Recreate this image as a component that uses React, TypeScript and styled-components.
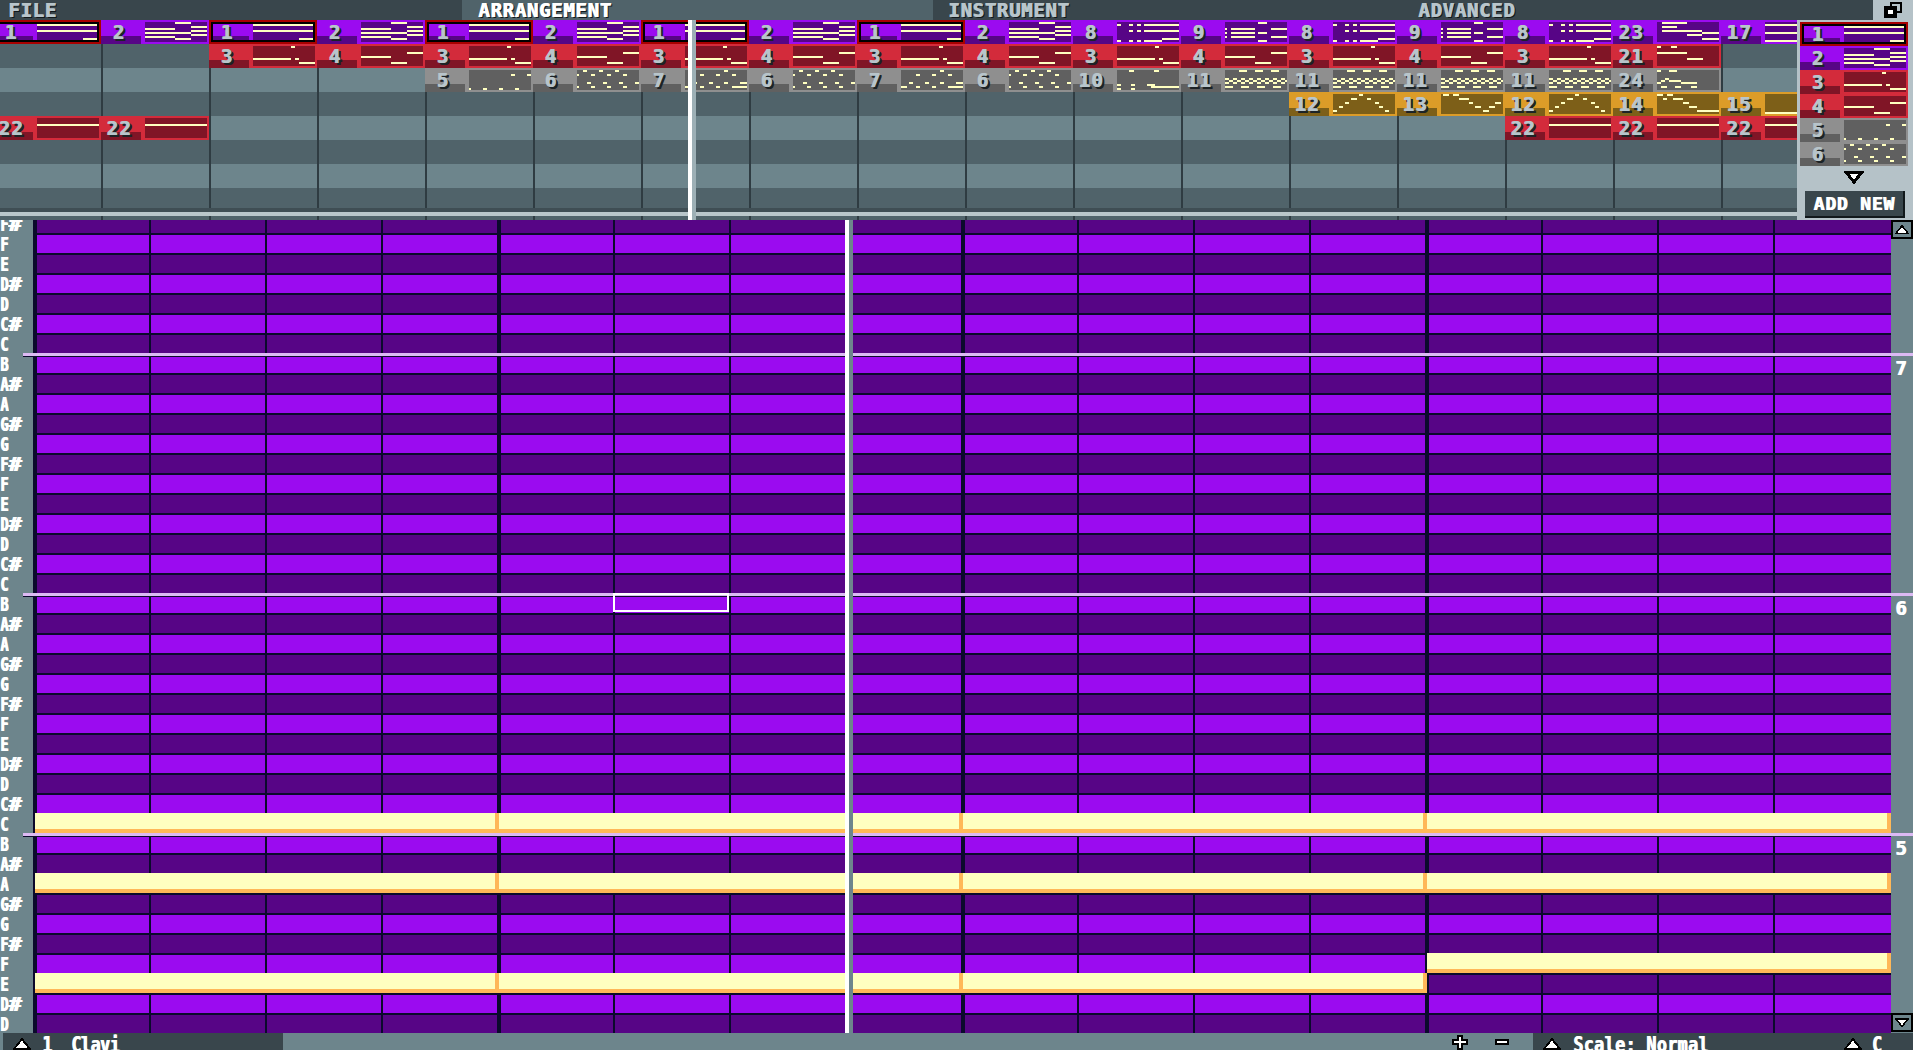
import React from "react";
import styled, { createGlobalStyle } from "styled-components";

const PIXEL_FONT = `"DejaVu Sans Mono", "Liberation Mono", monospace`;

const GlobalStyle = createGlobalStyle`
    html, body {
        margin: 0;
        padding: 0;
        background: #6d858c;
    }
`;

type Theme = "purple" | "red" | "grey" | "orange";
type NoteBar = [number, number, number];

const THEMES: Record<Theme, { main: string; dark: string }> = {
    purple: { main: "#9b0bf0", dark: "#570586" },
    red: { main: "#d32b3b", dark: "#801526" },
    grey: { main: "#8f8f8f", dark: "#606060" },
    orange: { main: "#dc9c28", dark: "#7d5f18" },
};

const dashes = (y: number, start: number, w: number, gap: number): NoteBar[] => {
    const out: NoteBar[] = [];
    for (let x = start; x < 62; x += w + gap) out.push([x, y, Math.min(w, 62 - x)]);
    return out;
};

// mini piano roll of each pattern: [x, y, width], all notes are 2px high
const PATTERNS: Record<string, NoteBar[]> = {
    "1": [[0, 4, 62], [0, 10, 62], [46, 18, 16]],
    "2": [[30, 2, 16], [46, 6, 16], [0, 8, 30], [46, 10, 16], [0, 12, 30], [30, 12, 16], [46, 14, 16], [0, 16, 30], [30, 18, 16]],
    "3": [[38, 2, 4], [0, 14, 38], [42, 14, 4], [46, 18, 16]],
    "4": [[46, 8, 16], [0, 12, 30], [30, 18, 16]],
    "5": [[42, 6, 4], [58, 6, 4], [0, 20, 2], [14, 20, 4], [30, 20, 4], [46, 20, 4]],
    "6": [[6, 2, 4], [22, 2, 4], [38, 2, 4], [0, 6, 2], [14, 6, 4], [30, 6, 4], [46, 6, 4], [10, 14, 4], [26, 14, 4], [42, 14, 4], [58, 14, 4], [0, 18, 2], [14, 18, 4], [30, 18, 4], [46, 18, 4]],
    "7": [[39, 2, 4], [15, 6, 4], [31, 6, 4], [47, 6, 4], [8, 14, 4], [24, 14, 4], [39, 14, 4], [55, 14, 7], [0, 18, 6], [15, 18, 4], [31, 18, 4], [47, 18, 15]],
    "8": [[0, 4, 4], [12, 4, 4], [20, 4, 4], [27, 4, 35], [12, 10, 4], [20, 10, 4], [27, 10, 35], [0, 20, 4], [12, 20, 4], [20, 20, 4], [27, 20, 18], [45, 18, 17]],
    "9": [[33, 2, 9], [0, 8, 2], [6, 8, 24], [46, 8, 16], [0, 12, 2], [6, 12, 24], [33, 12, 9], [0, 16, 2], [6, 16, 24], [46, 16, 16], [33, 20, 9]],
    "10": [[12, 2, 5], [37, 2, 5], [0, 16, 4], [14, 16, 4], [30, 16, 8], [0, 20, 4], [14, 20, 4], [34, 18, 28]],
    "11": [
        ...dashes(2, 14, 8, 8),
        ...dashes(10, 0, 4, 4),
        ...dashes(12, 4, 4, 4),
        ...dashes(14, 0, 4, 4),
        ...dashes(18, 0, 8, 8),
    ],
    "12": [[26, 2, 4], [18, 6, 6], [34, 6, 4], [12, 10, 4], [42, 10, 4], [6, 14, 4], [46, 14, 4], [0, 18, 4], [52, 18, 4]],
    "13": [[2, 2, 6], [12, 2, 6], [18, 6, 10], [28, 10, 4], [54, 10, 6], [34, 14, 6], [48, 14, 6], [42, 18, 6]],
    "14": [[0, 2, 6], [10, 2, 6], [6, 6, 4], [16, 6, 10], [26, 10, 6], [32, 14, 8], [40, 18, 22]],
    "15": [[0, 20, 62]],
    "17": [[0, 4, 62], [0, 12, 62], [0, 20, 62]],
    "21": [[0, 8, 30], [30, 14, 16], [0, 2, 4], [14, 2, 6]],
    "22": [[0, 8, 62]],
    "23": [[5, 2, 25], [5, 6, 15], [5, 10, 40], [45, 12, 17], [30, 14, 15], [45, 18, 17]],
    "24": [[0, 2, 4], [12, 2, 8], [8, 10, 4], [4, 12, 4], [12, 12, 12], [0, 14, 4], [24, 14, 16], [4, 18, 6], [18, 18, 6], [34, 18, 6]],
};

const themeOf = (id: string): Theme => {
    const n = Number(id);
    if ([1, 2, 8, 9, 17, 23].includes(n)) return "purple";
    if ([3, 4, 21, 22].includes(n)) return "red";
    if (n >= 12 && n <= 15) return "orange";
    return "grey";
};

// "*" marks the selected pattern, "" an empty cell
const TRACKS: string[][] = [
    ["1*", "2", "1*", "2", "1*", "2", "1*", "2", "1*", "2", "8", "9", "8", "9", "8", "23", "17"],
    ["", "", "3", "4", "3", "4", "3", "4", "3", "4", "3", "4", "3", "4", "3", "21", ""],
    ["", "", "", "", "5", "6", "7", "6", "7", "6", "10", "11", "11", "11", "11", "24", ""],
    ["", "", "", "", "", "", "", "", "", "", "", "", "12", "13", "12", "14", "15"],
    ["22", "22", "", "", "", "", "", "", "", "", "", "", "", "", "22", "22", "22"],
    Array(17).fill(""),
    Array(17).fill(""),
    Array(17).fill(""),
];

const KEYS = ["B", "A#", "A", "G#", "G", "F#", "F", "E", "D#", "D", "C#", "C"];

// rows from the clipped F# at the top down to the D at the bottom
const ROWS = Array.from({ length: 41 }, (_, i) => {
    const k = (i + 5 + 12 * 4) % 12;
    return {
        name: KEYS[k],
        bright: i % 2 === 1,
        octave: k === 0 ? 7 - (i - 7) / 12 : null,
    };
});

// row index -> the bars that hold a note on it
const NOTES: Record<number, number[]> = {
    30: [0, 1, 2, 3],
    33: [0, 1, 2, 3],
    37: [3],
    38: [0, 1, 2],
};

const Page = styled.div`
    width: 1913px;
    height: 1050px;
    display: flex;
    flex-direction: column;
    overflow: hidden;
    background: #6d858c;
    font-family: ${PIXEL_FONT};
    font-weight: 700;
`;

const TabBar = styled.div`
    display: flex;
    height: 20px;
    flex: none;
    background: #39464c;
`;

const Tab = styled.div<{ $width: number; $pad: number; $active?: boolean }>`
    flex: none;
    width: ${(p) => p.$width}px;
    height: 20px;
    box-sizing: border-box;
    padding-left: ${(p) => p.$pad}px;
    overflow: hidden;
    background: ${(p) => (p.$active ? "#50636a" : "transparent")};
    color: ${(p) => (p.$active ? "#ffffff" : "#b8c5cb")};
    font-size: 19px;
    line-height: 20px;
    letter-spacing: 0.7px;
    text-shadow: 1px 0 0 currentColor, 2px 1px 0 #11181b;
`;

const WindowCell = styled.div`
    margin-left: auto;
    flex: none;
    width: 40px;
    height: 20px;
    display: flex;
    align-items: center;
    justify-content: center;
    background: #b5c2c8;
`;

const TopArea = styled.div`
    display: flex;
    height: 200px;
    flex: none;
`;

const Arrangement = styled.div`
    position: relative;
    width: 1797px;
    flex: none;
    overflow: hidden;
    background: #50636a;
`;

const TrackRow = styled.div<{ $light?: boolean; $height?: number }>`
    display: flex;
    height: ${(p) => p.$height ?? 24}px;
    margin-left: -7px;
    background: ${(p) => (p.$light ? "#6d858c" : "#50636a")};
`;

const TrackCell = styled.div`
    flex: none;
    width: 108px;
    height: 100%;
    box-sizing: border-box;
    border-left: 2px solid #2f3c42;
`;

const Divider = styled.div`
    height: 4px;
    background: #b9c6ca;
    box-shadow: 0 -4px 0 #3f4e54;
    position: relative;
`;

const Playhead = styled.div<{ $left: number }>`
    position: absolute;
    top: 0;
    bottom: 0;
    left: ${(p) => p.$left}px;
    width: 8px;
    z-index: 5;
    background: linear-gradient(90deg, #ffffff 4px, #9db0b6 4px);
`;

const RollPlayhead = styled(Playhead)`
    background: linear-gradient(90deg, #ffffff 4px, #6d858c 4px);
`;

const TileBox = styled.div<{ $theme: Theme }>`
    position: relative;
    flex: none;
    display: flex;
    width: 108px;
    height: 24px;
    background: ${(p) => THEMES[p.$theme].main};
`;

const SelectedFrame = styled.div`
    position: absolute;
    inset: 0;
    border: 2px solid #a80000;
    box-shadow: inset 0 0 0 2px #000000;
`;

const TileNumber = styled.div<{ $theme: Theme }>`
    flex: none;
    width: 40px;
    height: 24px;
    box-sizing: border-box;
    padding-right: 4px;
    text-align: center;
    background: linear-gradient(to top, ${(p) => THEMES[p.$theme].dark} 8px, transparent 8px);
    color: #b8c5cb;
    font-size: 19px;
    line-height: 25px;
    letter-spacing: 1.4px;
    text-shadow: 1px 0 0 #b8c5cb, 2px 2px 0 #1c2326, 3px 2px 0 #1c2326;
`;

const TileThumb = styled.svg<{ $theme: Theme }>`
    flex: none;
    width: 62px;
    height: 20px;
    margin: 2px 2px 2px 4px;
    background: ${(p) => THEMES[p.$theme].dark};
`;

const SidePanel = styled.div`
    flex: none;
    width: 116px;
    box-sizing: border-box;
    padding: 2px 5px 0 3px;
    display: flex;
    flex-direction: column;
    background: #b5c2c8;
`;

const ListArrow = styled.svg`
    display: block;
    margin: 4px auto 0;
`;

const AddNew = styled.div`
    width: 100px;
    height: 27px;
    box-sizing: border-box;
    margin: 7px 0 0 5px;
    background: #39464c;
    border-right: 2px solid #11181b;
    border-bottom: 2px solid #11181b;
    color: #ffffff;
    font-size: 18px;
    line-height: 25px;
    letter-spacing: 0.8px;
    text-align: center;
    white-space: nowrap;
    text-shadow: 1px 0 0 #ffffff;
`;

const Roll = styled.div`
    position: relative;
    height: 813px;
    flex: none;
    overflow: hidden;
`;

const RollRows = styled.div`
    margin-top: -5px;
`;

const PianoRow = styled.div<{ $octaveStart: boolean }>`
    position: relative;
    display: flex;
    height: 20px;
    ${(p) =>
        p.$octaveStart &&
        `&::before {
            content: "";
            position: absolute;
            z-index: 3;
            top: -2px;
            left: 23px;
            right: 0;
            height: 3px;
            background: #dcb9f4;
        }
        &::after {
            content: "";
            position: absolute;
            z-index: 3;
            top: 1px;
            left: 23px;
            right: 22px;
            height: 1px;
            background: #0b0a2c;
        }`}
`;

const KeyLabel = styled.div`
    flex: none;
    width: 33px;
    height: 20px;
    overflow: hidden;
    color: #ffffff;
    font-size: 13.5px;
    line-height: 18px;
    transform: scaleY(1.4);
    transform-origin: 0 50%;
    white-space: nowrap;
    text-shadow: 1px 0 0 #ffffff;
`;

const Sharp = styled.span`
    display: inline-block;
    transform: scaleX(1.6);
    transform-origin: 0 50%;
`;

// beat lines every 116px, every fourth one is a thick bar line
const Lane = styled.div<{ $bright: boolean }>`
    position: relative;
    flex: none;
    width: 1858px;
    height: 20px;
    box-sizing: border-box;
    background-color: ${(p) => (p.$bright ? "#9b0bf0" : "#570586")};
    background-image:
        repeating-linear-gradient(90deg, #0b0a2c 0 2px, transparent 2px 462px, #0b0a2c 462px 464px),
        repeating-linear-gradient(90deg, transparent 0 114px, #0b0a2c 114px 116px);
    background-size: 1854px 100%;
    background-position: 2px 0;
    background-repeat: no-repeat;
    border-bottom: 2px solid #0b0a2c;
    box-shadow: inset 4px 0 0 #0b0a2c;
`;

const NoteBlock = styled.div<{ $bar: number }>`
    position: absolute;
    z-index: 2;
    top: -2px;
    left: ${(p) => 2 + p.$bar * 464}px;
    width: 464px;
    height: 20px;
    box-sizing: border-box;
    background: #ffffc0;
    border-right: 4px solid #ffb858;
    border-bottom: 4px solid #ffb858;
`;

const CellCursor = styled.div`
    position: absolute;
    z-index: 4;
    top: -2px;
    left: 580px;
    width: 116px;
    height: 19px;
    box-sizing: border-box;
    border: 2px solid #ffffff;
`;

const OctaveCell = styled.div`
    flex: none;
    width: 22px;
    height: 20px;
    box-sizing: border-box;
    padding: 5px 0 0 4px;
    color: #ffffff;
    font-size: 19px;
    line-height: 16px;
    text-shadow: 1px 0 0 #ffffff;
`;

const ScrollButton = styled.div<{ $down?: boolean }>`
    position: absolute;
    z-index: 4;
    right: 0;
    ${(p) => (p.$down ? "bottom: 1px;" : "top: 0;")}
    width: 22px;
    height: 19px;
    box-sizing: border-box;
    border: 2px solid #000000;
    background: #6d858c;
    display: flex;
    align-items: center;
    justify-content: center;
`;

const BottomBar = styled.div`
    display: flex;
    align-items: stretch;
    height: 17px;
    flex: none;
    overflow: hidden;
    color: #ffffff;
    font-size: 16.5px;
    line-height: 20px;
    text-shadow: 1px 0 0 #ffffff;
`;

const Dropdown = styled.div<{ $width: number; $inset?: number }>`
    flex: none;
    display: flex;
    width: ${(p) => p.$width}px;
    margin-left: ${(p) => p.$inset ?? 0}px;
    box-sizing: border-box;
    padding-left: 10px;
    background: #39464c;
    white-space: pre;
`;

const ArrowSlot = styled.span<{ $gap?: number }>`
    flex: none;
    display: flex;
    padding-top: 5px;
    margin-left: ${(p) => p.$gap ?? 0}px;
`;

const DropText = styled.span<{ $gap: number; $spacing?: number }>`
    margin-left: ${(p) => p.$gap}px;
    letter-spacing: ${(p) => p.$spacing ?? 0}px;
    transform: scaleY(1.25);
    transform-origin: 0 0;
`;

const ZoomButtons = styled.div`
    margin-left: auto;
    display: flex;
    align-items: flex-start;
    gap: 26px;
    padding-right: 23px;
    padding-top: 2px;
`;

const Triangle = ({ down, size = 18 }: { down?: boolean; size?: number }) => (
    <svg width={size} height={size * 0.67} viewBox="0 0 18 12" shapeRendering="crispEdges">
        <polygon
            points={down ? "1,1 17,1 9,11" : "9,1 17,11 1,11"}
            fill="#ffffff"
            stroke="#000000"
            strokeWidth="2"
        />
    </svg>
);

const Tile = ({ id }: { id: string }) => {
    const selected = id.endsWith("*");
    const number = id.replace("*", "");
    const theme = themeOf(number);
    return (
        <TileBox $theme={theme}>
            <TileNumber $theme={theme}>{number}</TileNumber>
            <TileThumb $theme={theme} viewBox="0 2 62 20" shapeRendering="crispEdges">
                {PATTERNS[number].map(([x, y, w], i) => (
                    <rect key={i} x={x} y={y} width={w} height={2} fill="#ffffc0" />
                ))}
            </TileThumb>
            {selected && <SelectedFrame />}
        </TileBox>
    );
};

const App = () => (
    <Page>
        <GlobalStyle />
        <TabBar>
            <Tab $width={462} $pad={8}>FILE</Tab>
            <Tab $width={471} $pad={16} $active>ARRANGEMENT</Tab>
            <Tab $width={470} $pad={15}>INSTRUMENT</Tab>
            <Tab $width={470} $pad={15}>ADVANCED</Tab>
            <WindowCell>
                <svg width="20" height="18" viewBox="0 0 20 18" shapeRendering="crispEdges">
                    <path d="M7 1h12v11h-5v-2h3V3H9v2H7z" fill="#000000" />
                    <path d="M1 5h13v12H1z" fill="#000000" />
                    <path d="M5 9h5v4H5z" fill="#ffffff" />
                </svg>
            </WindowCell>
        </TabBar>

        <TopArea>
            <Arrangement>
                {TRACKS.map((cells, r) => (
                    <TrackRow key={r} $light={r % 2 === 0 && r > 0}>
                        {cells.map((id, c) =>
                            id ? <Tile key={c} id={id} /> : <TrackCell key={c} />
                        )}
                    </TrackRow>
                ))}
                <Divider />
                <TrackRow $height={4}>
                    {Array.from({ length: 17 }, (_, c) => <TrackCell key={c} />)}
                </TrackRow>
                <Playhead $left={688} />
            </Arrangement>
            <SidePanel>
                {["1*", "2", "3", "4", "5", "6"].map((id) => <Tile key={id} id={id} />)}
                <ListArrow width="20" height="14" viewBox="0 0 20 14" shapeRendering="crispEdges">
                    <polygon points="2,2 18,2 10,12" fill="#ffffff" stroke="#000000" strokeWidth="3" />
                </ListArrow>
                <AddNew>ADD NEW</AddNew>
            </SidePanel>
        </TopArea>

        <Roll>
            <RollRows>
                {ROWS.map((row, i) => (
                    <PianoRow key={i} $octaveStart={row.octave !== null}>
                        <KeyLabel>
                            {row.name[0]}
                            {row.name[1] && <Sharp>#</Sharp>}
                        </KeyLabel>
                        <Lane $bright={row.bright}>
                            {(NOTES[i] ?? []).map((bar) => <NoteBlock key={bar} $bar={bar} />)}
                            {i === 19 && <CellCursor />}
                        </Lane>
                        <OctaveCell>{row.octave}</OctaveCell>
                    </PianoRow>
                ))}
            </RollRows>
            <RollPlayhead $left={845} />
            <ScrollButton><Triangle size={14} /></ScrollButton>
            <ScrollButton $down><Triangle down size={14} /></ScrollButton>
        </Roll>

        <BottomBar>
            <Dropdown $width={280} $inset={3}>
                <ArrowSlot><Triangle /></ArrowSlot>
                <DropText $gap={11} $spacing={-0.3}>1  Clavi</DropText>
            </Dropdown>
            <ZoomButtons>
                <svg width="16" height="15" viewBox="0 0 16 15" shapeRendering="crispEdges">
                    <path d="M5 0h6v4h5v6h-5v5H5v-5H0V4h5z" fill="#000000" />
                    <path d="M7 2h2v4h5v2H9v5H7V8H2V6h5z" fill="#ffffff" />
                </svg>
                <svg width="16" height="15" viewBox="0 0 16 15" shapeRendering="crispEdges">
                    <path d="M1 4h14v6H1z" fill="#000000" />
                    <path d="M3 6h10v2H3z" fill="#ffffff" />
                </svg>
            </ZoomButtons>
            <Dropdown $width={380}>
                <ArrowSlot><Triangle /></ArrowSlot>
                <DropText $gap={12} $spacing={0.5}>Scale: Normal</DropText>
                <ArrowSlot $gap={135}><Triangle /></ArrowSlot>
                <DropText $gap={10}>C</DropText>
            </Dropdown>
        </BottomBar>
    </Page>
);

export default App;
